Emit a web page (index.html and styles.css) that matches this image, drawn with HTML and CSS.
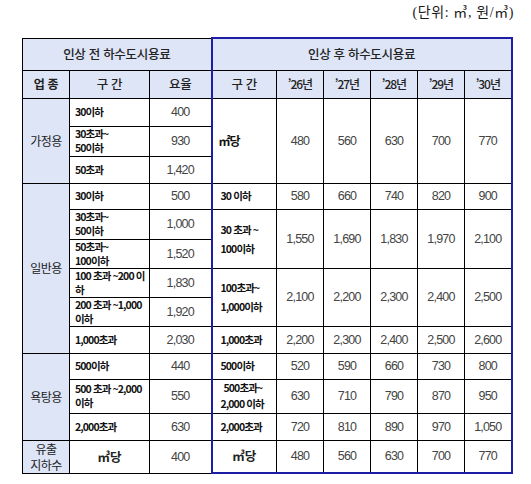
FILE: index.html
```html
<!DOCTYPE html>
<html lang="ko">
<head>
<meta charset="utf-8">
<link rel="stylesheet" href="styles.css">
</head>
<body>
<div class="page">
  <div class="unit">(단위: ㎥, 원/㎥)</div>
  <table class="fee">
    <colgroup>
      <col class="c1"><col class="c2"><col class="c3"><col class="c4">
      <col class="cy"><col class="cy"><col class="cy"><col class="cy"><col class="cy">
    </colgroup>
    <tr class="r-h1">
      <th colspan="3" class="h">인상 전 하수도시용료</th>
      <th colspan="6" class="h bl br bt">인상 후 하수도시용료</th>
    </tr>
    <tr class="r-h2">
      <th class="h b">업 종</th>
      <th class="h">구 간</th>
      <th class="h">요율</th>
      <th class="h bl">구 간</th>
      <th class="h y">’26년</th>
      <th class="h y">’27년</th>
      <th class="h y">’28년</th>
      <th class="h y">’29년</th>
      <th class="h y br">’30년</th>
    </tr>

    <tr class="r28">
      <td rowspan="3" class="cat">가정용</td>
      <td class="lbl dot">30이하</td>
      <td class="num dot">400</td>
      <td rowspan="3" class="lbl2 m2 bl">㎡당</td>
      <td rowspan="3" class="num">480</td>
      <td rowspan="3" class="num">560</td>
      <td rowspan="3" class="num">630</td>
      <td rowspan="3" class="num">700</td>
      <td rowspan="3" class="num br">770</td>
    </tr>
    <tr class="r30">
      <td class="lbl dot">30초과~<br>50이하</td>
      <td class="num dot">930</td>
    </tr>
    <tr class="r27">
      <td class="lbl">50초과</td>
      <td class="num">1,420</td>
    </tr>

    <tr class="r26">
      <td rowspan="6" class="cat">일반용</td>
      <td class="lbl dot">30이하</td>
      <td class="num dot">500</td>
      <td class="lbl2 bl dot">30 이하</td>
      <td class="num dot">580</td>
      <td class="num dot">660</td>
      <td class="num dot">740</td>
      <td class="num dot">820</td>
      <td class="num dot br">900</td>
    </tr>
    <tr class="r30">
      <td class="lbl dot">30초과~<br>50이하</td>
      <td class="num dot">1,000</td>
      <td rowspan="2" class="lbl2 tall bl dot">30 초과 ~<br>100이하</td>
      <td rowspan="2" class="num dot">1,550</td>
      <td rowspan="2" class="num dot">1,690</td>
      <td rowspan="2" class="num dot">1,830</td>
      <td rowspan="2" class="num dot">1,970</td>
      <td rowspan="2" class="num dot br">2,100</td>
    </tr>
    <tr class="r29">
      <td class="lbl dot">50초과~<br>100이하</td>
      <td class="num dot">1,520</td>
    </tr>
    <tr class="r29">
      <td class="lbl dot">100 초과 ~200 이<br>하</td>
      <td class="num dot">1,830</td>
      <td rowspan="2" class="lbl2 tall bl dot">100초과~<br>1,000이하</td>
      <td rowspan="2" class="num dot">2,100</td>
      <td rowspan="2" class="num dot">2,200</td>
      <td rowspan="2" class="num dot">2,300</td>
      <td rowspan="2" class="num dot">2,400</td>
      <td rowspan="2" class="num dot br">2,500</td>
    </tr>
    <tr class="r29">
      <td class="lbl dot">200 초과 ~1,000<br>이하</td>
      <td class="num dot">1,920</td>
    </tr>
    <tr class="r27">
      <td class="lbl">1,000초과</td>
      <td class="num">2,030</td>
      <td class="lbl2 bl">1,000초과</td>
      <td class="num">2,200</td>
      <td class="num">2,300</td>
      <td class="num">2,400</td>
      <td class="num">2,500</td>
      <td class="num br">2,600</td>
    </tr>

    <tr class="r26">
      <td rowspan="3" class="cat">욕탕용</td>
      <td class="lbl dot">500이하</td>
      <td class="num dot">440</td>
      <td class="lbl2 bl dot">500이하</td>
      <td class="num dot">520</td>
      <td class="num dot">590</td>
      <td class="num dot">660</td>
      <td class="num dot">730</td>
      <td class="num dot br">800</td>
    </tr>
    <tr class="r34">
      <td class="lbl dot">500 초과 ~2,000<br>이하</td>
      <td class="num dot">550</td>
      <td class="lbl2 mid bl dot"><span class="ind">500초과~</span><br>2,000 이하</td>
      <td class="num dot">630</td>
      <td class="num dot">710</td>
      <td class="num dot">790</td>
      <td class="num dot">870</td>
      <td class="num dot br">950</td>
    </tr>
    <tr class="r27">
      <td class="lbl">2,000초과</td>
      <td class="num">630</td>
      <td class="lbl2 bl">2,000초과</td>
      <td class="num">720</td>
      <td class="num">810</td>
      <td class="num">890</td>
      <td class="num">970</td>
      <td class="num br">1,050</td>
    </tr>

    <tr class="r33">
      <td class="cat two">유출<br>지하수</td>
      <td class="per">㎥당</td>
      <td class="num">400</td>
      <td class="per bl bb">㎥당</td>
      <td class="num bb">480</td>
      <td class="num bb">560</td>
      <td class="num bb">630</td>
      <td class="num bb">700</td>
      <td class="num bb br">770</td>
    </tr>
  </table>
</div>
</body>
</html>
```

FILE: styles.css
```css
html, body {
  margin: 0;
  padding: 0;
  background: #ffffff;
}

.page {
  width: 531px;
  height: 484px;
  padding: 4px 0 0 22px;
  box-sizing: border-box;
  font-family: "Noto Sans CJK KR", sans-serif;
  color: #1a1a1a;
  overflow: hidden;
}

.unit {
  width: 492px;
  text-align: right;
  font-family: "Liberation Serif", "Noto Sans CJK KR", serif;
  font-size: 14px;
  line-height: 18px;
  height: 33px;
  letter-spacing: 0.6px;
}

.fee {
  border-collapse: collapse;
  table-layout: fixed;
  width: 490px;
}

.c1 { width: 47px; }
.c2 { width: 80px; }
.c3 { width: 62px; }
.c4 { width: 65px; }
.cy { width: 47px; }

.fee th,
.fee td {
  border: 1px solid #000;
  padding: 0;
  overflow: hidden;
  white-space: nowrap;
  line-height: 14px;
}

.r-h1 { height: 32px; }
.r-h2 { height: 28px; }
.r26 { height: 26px; }
.r27 { height: 27px; }
.r28 { height: 28px; }
.r29 { height: 29px; }
.r30 { height: 30px; }
.r33 { height: 33px; }
.r34 { height: 34px; }

.h {
  background: #dde5f6;
  font-weight: 500;
  font-size: 12.5px;
  letter-spacing: -0.3px;
  text-align: center;
  color: #222;
}

.h.b {
  font-weight: 700;
  font-size: 12px;
}

.h.y {
  font-size: 12px;
  letter-spacing: -1px;
}

.cat {
  background: #dde5f6;
  text-align: center;
  font-size: 12px;
  letter-spacing: -0.6px;
  color: #222;
}

.fee .cat.two {
  line-height: 16px;
}

.lbl,
.lbl2 {
  text-align: left;
  font-size: 10.5px;
  font-weight: 700;
  letter-spacing: -0.9px;
  color: #111;
}

.fee .lbl {
  padding-left: 5px;
}

.fee .lbl2 {
  padding-left: 8px;
}

.fee .lbl2.m2 {
  padding-left: 6px;
  font-size: 12px;
}

.fee .lbl2.tall {
  line-height: 19px;
}

.fee .lbl2.mid {
  line-height: 16px;
}

.ind {
  padding-left: 3px;
}

.per {
  text-align: center;
  font-size: 12.5px;
  font-weight: 700;
  color: #222;
}

.num {
  text-align: center;
  font-family: "Liberation Sans", sans-serif;
  font-size: 12.5px;
  color: #444;
  letter-spacing: -0.8px;
}

.fee .dot {
  border-bottom: 1px dotted #000;
}

.fee .bl { border-left: 2px solid #1d1da6; }
.fee .br { border-right: 2px solid #1d1da6; }
.fee .bt { border-top: 2px solid #1d1da6; }
.fee .bb { border-bottom: 2px solid #1d1da6; }
```
